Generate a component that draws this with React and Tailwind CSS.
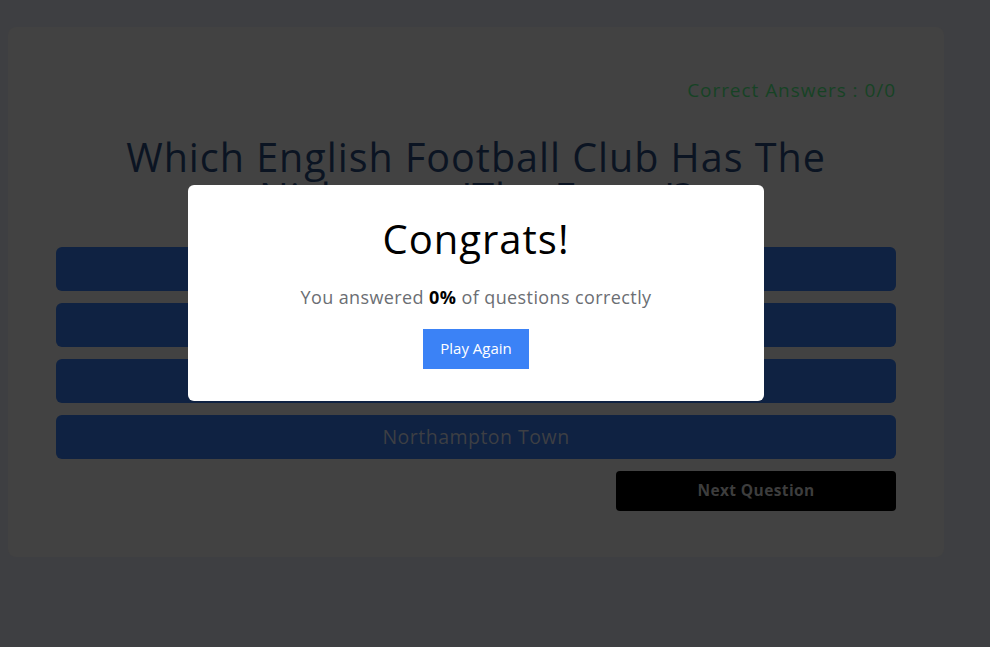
import React from 'react';

const answers = ['Leicester City', 'Norwich City', 'Ipswich Town', 'Northampton Town'];

const font = { fontFamily: '"Open Sans", "Noto Sans", sans-serif' };

export default function App() {
  return (
    <div className="min-h-screen bg-[#3e3f42] pt-[27px] pl-2" style={font}>
      <div className="relative w-[936px] h-[530px] rounded-lg bg-[#424242] px-12 pt-[49px]">
        <p className="text-right text-[19px] leading-7 tracking-wider text-[#174225]">Correct Answers : 0/0</p>

        <h1 className="mt-[33px] px-12 text-center text-[39.5px] leading-[40px] tracking-wide text-[#0b1422]">
          Which English Football Club Has The Nickname 'The Foxes'?
        </h1>

        <div className="mt-[30px] flex flex-col gap-3">
          {answers.map((a) => (
            <button
              key={a}
              className="h-11 w-full rounded-md bg-[#0f2242] text-[19.5px] tracking-wide text-[#3d3f44]"
            >
              {a}
            </button>
          ))}
        </div>

        <div className="mt-3 flex justify-end">
          <button className="h-10 w-[280px] rounded bg-black text-[15.5px] font-bold tracking-wide text-[#3d3d3d]">
            Next Question
          </button>
        </div>

        <div className="absolute inset-0 flex items-center justify-center">
          <div className="mt-px w-[576px] rounded-md bg-white px-8 pt-[26px] pb-[32px] text-center">
            <h2 className="text-[40px] leading-[56px] tracking-wide text-black">Congrats!</h2>
            <p className="mt-[18px] text-[18px] leading-6 tracking-[0.4px] text-[#6b6e73]">
              You answered <span className="font-bold text-black">0%</span> of questions correctly
            </p>
            <button className="mt-5 h-10 w-[106px] bg-[#3b82f6] text-[15px] text-white">Play Again</button>
          </div>
        </div>
      </div>
    </div>
  );
}
